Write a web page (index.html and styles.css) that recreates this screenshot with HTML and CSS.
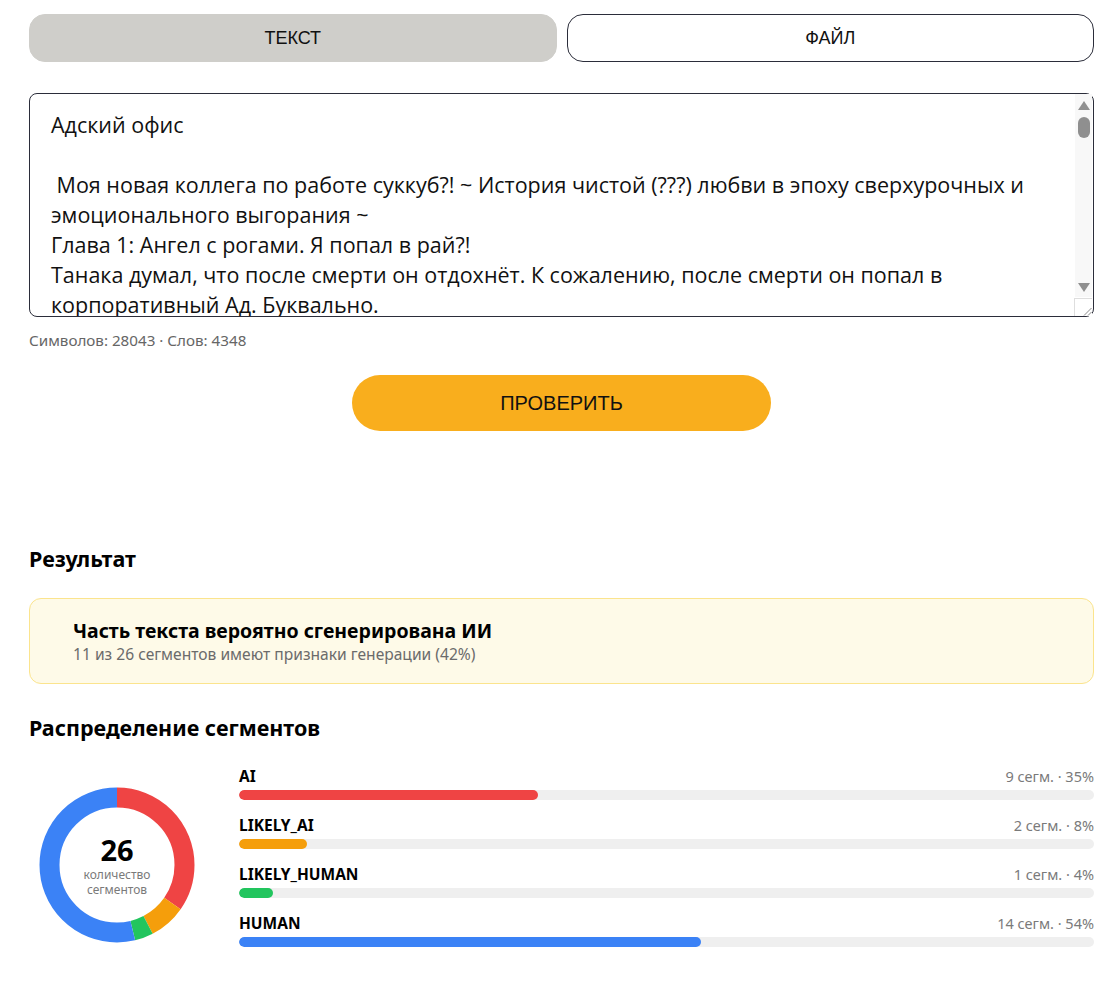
FILE: index.html
```html
<!DOCTYPE html>
<html lang="ru">
<head>
<meta charset="utf-8">
<title>Проверка текста</title>
<link rel="stylesheet" href="styles.css">
</head>
<body>
<main class="page">
  <div class="tabs">
    <button class="tab tab-active">ТЕКСТ</button>
    <button class="tab">ФАЙЛ</button>
  </div>

  <div class="editor-wrap">
  <textarea class="editor" spellcheck="false">Адский офис

 Моя новая коллега по работе суккуб?! ~ История чистой (???) любви в эпоху сверхурочных и эмоционального выгорания ~
Глава 1: Ангел с рогами. Я попал в рай?!
Танака думал, что после смерти он отдохнёт. К сожалению, после смерти он попал в корпоративный Ад. Буквально.
Огромное здание из чёрного обсидиана возвышалось над багровым небом, а на стеклянных дверях висела табличка: «ООО "Преисподняя". Отдел по работе с грешниками. Вход строго по пропускам».
Внутри пахло серой, дешёвым кофе и отчаянием. Где-то звонили телефоны, шуршали бумаги, а из дальнего угла доносились приглушённые стоны — видимо, там проходила планёрка.
— Новенький? — спросил усталый бес за стойкой ресепшена, не поднимая глаз от монитора. — Заполните анкету. В трёх экземплярах. Синей ручкой. Чёрной нельзя, чёрная у нас только для контрактов.
Танака обречённо взял стопку бланков. Даже после смерти бюрократия не отпускала его.
— Простите, а где здесь... ну... котлы? Вечные муки?
Бес наконец поднял глаза. В них читалась вся скорбь мира.
— Котлы сократили в прошлом квартале. Оптимизация. Теперь у нас открытое пространство, гибкий график и корпоративная культура. Поверьте, это хуже.
Танака хотел было возразить, но в этот момент двери лифта открылись, и в холл вошла она.
Высокая, в строгом сером костюме, с аккуратным пучком тёмных волос и папкой документов в руках. Если бы не маленькие изящные рожки и тонкий хвост, выглядывающий из-под юбки, её можно было бы принять за обычную сотрудницу отдела кадров.
— Вы Танака-сан? — улыбнулась она, и у Танаки перехватило дыхание. — Меня зовут Лилит. Я буду вашим наставником на испытательном сроке.
«Я попал в рай?!» — подумал Танака.
Это была его первая ошибка.
Глава 2: Испытательный срок длиною в вечность
Рабочее место Танаки находилось между кулером, который выдавал исключительно кипяток, и окном с видом на озеро лавы. Стол был завален папками, а старый монитор мигал так, будто тоже страдал от переработок.
— Ваша задача проста, — объясняла Лилит, склонившись над его плечом. — Обработать входящие заявки грешников, распределить их по кругам и подготовить отчёт к пятнице.
— К какой пятнице?
— К каждой, — мягко ответила она. — Здесь всегда пятница. И всегда дедлайн.
Танака посмотрел на часы. Стрелки не двигались. Точнее, они двигались, но всегда показывали без пяти шесть.
— Это чтобы никто не уходил вовремя, — пояснила Лилит. — Психологический приём. Очень эффективный.
Он вздохнул и открыл первую папку. Грешник номер 66613: опоздание на работу, двенадцать тысяч раз. Приговор: вечная очередь в бухгалтерию.
— Справедливо, — пробормотал Танака.
Лилит рассмеялась, и на мгновение Танаке показалось, что в этом мрачном офисе стало немного светлее.
Глава 3: Корпоратив в девятом круге
Через неделю — или через вечность, здесь было трудно понять — в общем чате появилось объявление: «Обязательный корпоратив! Явка строго обязательна. Отказ будет засчитан как грех уныния».
— Мы правда должны идти? — спросил Танака.
— Все должны, — ответила Лилит, поправляя рожки перед зеркалом. — Даже начальство. Особенно начальство.
</textarea>
    <div class="scrollbar" aria-hidden="true">
      <span class="sb-arrow sb-up"></span>
      <span class="sb-thumb"></span>
      <span class="sb-arrow sb-down"></span>
    </div>
    <div class="resizer" aria-hidden="true">
      <svg width="10" height="10" viewBox="0 0 10 10"><line x1="9.5" y1="2" x2="2" y2="9.5" stroke="#8a8a8a" stroke-width="1"/><line x1="9.5" y1="6" x2="6" y2="9.5" stroke="#8a8a8a" stroke-width="1"/></svg>
    </div>
  </div>

  <div class="counts">Символов: 28043 · Слов: 4348</div>

  <div class="actions">
    <button class="check-btn">ПРОВЕРИТЬ</button>
  </div>

  <h2 class="section-title result-title">Результат</h2>

  <div class="verdict">
    <div class="verdict-title">Часть текста вероятно сгенерирована ИИ</div>
    <div class="verdict-sub">11 из 26 сегментов имеют признаки генерации (42%)</div>
  </div>

  <h2 class="section-title dist-title">Распределение сегментов</h2>

  <div class="dist">
    <div class="donut">
      <svg class="donut-svg" width="156" height="156" viewBox="0 0 156 156">
        <g transform="rotate(-90 78 78)">
          <circle cx="78" cy="78" r="67.5" fill="none" stroke="#ef4444" stroke-width="20" stroke-dasharray="146.82 500" stroke-dashoffset="0"/>
          <circle cx="78" cy="78" r="67.5" fill="none" stroke="#f59e0b" stroke-width="20" stroke-dasharray="32.62 500" stroke-dashoffset="-146.82"/>
          <circle cx="78" cy="78" r="67.5" fill="none" stroke="#22c55e" stroke-width="20" stroke-dasharray="16.31 500" stroke-dashoffset="-179.44"/>
          <circle cx="78" cy="78" r="67.5" fill="none" stroke="#3b82f6" stroke-width="20" stroke-dasharray="228.37 500" stroke-dashoffset="-195.75"/>
        </g>
      </svg>
      <div class="donut-center">
        <div class="donut-num">26</div>
        <div class="donut-cap">количество<br>сегментов</div>
      </div>
    </div>

    <div class="bars">
      <div class="bar-row">
        <div class="bar-head"><span class="bar-label">AI</span><span class="bar-val">9 сегм. · 35%</span></div>
        <div class="track"><div class="fill fill-ai" style="width:35%"></div></div>
      </div>
      <div class="bar-row">
        <div class="bar-head"><span class="bar-label">LIKELY_AI</span><span class="bar-val">2 сегм. · 8%</span></div>
        <div class="track"><div class="fill fill-lai" style="width:8%"></div></div>
      </div>
      <div class="bar-row">
        <div class="bar-head"><span class="bar-label">LIKELY_HUMAN</span><span class="bar-val">1 сегм. · 4%</span></div>
        <div class="track"><div class="fill fill-lh" style="width:4%"></div></div>
      </div>
      <div class="bar-row">
        <div class="bar-head"><span class="bar-label">HUMAN</span><span class="bar-val">14 сегм. · 54%</span></div>
        <div class="track"><div class="fill fill-h" style="width:54%"></div></div>
      </div>
    </div>
  </div>
</main>
</body>
</html>
```

FILE: styles.css
```css
* { box-sizing: border-box; }

html, body {
  margin: 0;
  padding: 0;
  background: #ffffff;
}

body {
  font-family: "Noto Sans", Roboto, "Liberation Sans", sans-serif;
  color: #111111;
}

.page {
  width: 1065px;
  margin-left: 29px;
  padding-top: 14px;
  padding-bottom: 60px;
}

.tabs {
  display: flex;
  gap: 10px;
}

.tab {
  flex: 1;
  height: 48px;
  border-radius: 16px;
  border: 1px solid #2b2d3a;
  background: #ffffff;
  font-family: "Liberation Sans", Arial, sans-serif;
  font-size: 18px;
  color: #111111;
  padding: 0;
  cursor: pointer;
}

.tab-active {
  background: #cfceca;
  border-color: #cfceca;
}

.editor-wrap {
  position: relative;
  margin-top: 31px;
  height: 224px;
}

.editor {
  display: block;
  width: 100%;
  height: 224px;
  border: 1px solid #2b2d3a;
  border-radius: 8px;
  padding: 16px 37px 0 21px;
  font-family: "Open Sans", "Noto Sans", sans-serif;
  font-size: 21.5px;
  line-height: 30px;
  color: #111111;
  background: #ffffff;
  resize: none;
  overflow: hidden;
  outline: none;
}

.scrollbar {
  position: absolute;
  top: 1px;
  right: 2px;
  width: 17px;
  height: 203px;
  background: #f8f8f8;
  display: flex;
  flex-direction: column;
  align-items: center;
}

.sb-arrow {
  display: block;
  width: 0;
  height: 0;
  border-left: 6.5px solid transparent;
  border-right: 6.5px solid transparent;
}

.sb-up {
  margin-top: 7px;
  border-bottom: 9px solid #909090;
}

.sb-thumb {
  display: block;
  width: 12px;
  height: 21px;
  margin-top: 7px;
  border-radius: 6px;
  background: #8f8f8f;
}

.sb-down {
  margin-top: auto;
  margin-bottom: 5px;
  border-top: 9px solid #909090;
}

.resizer {
  position: absolute;
  right: 2px;
  bottom: 1px;
  width: 18px;
  height: 18px;
  background: #ffffff;
  border-top: 1px solid #dedede;
  border-left: 1px solid #dedede;
  display: flex;
  align-items: flex-end;
  justify-content: flex-end;
}

.resizer svg {
  display: block;
}

.counts {
  margin-top: 13px;
  font-size: 15.2px;
  line-height: 20px;
  color: #666666;
}

.actions {
  display: flex;
  justify-content: center;
  margin-top: 25px;
}

.check-btn {
  width: 419px;
  height: 56px;
  border: none;
  border-radius: 28px;
  background: #f9ae1d;
  font-family: "Liberation Sans", Arial, sans-serif;
  font-size: 20px;
  color: #111111;
  cursor: pointer;
}

.section-title {
  margin: 0;
  font-size: 21.5px;
  line-height: 24px;
  font-weight: 700;
  color: #000000;
}

.result-title {
  margin-top: 116px;
}

.verdict {
  margin-top: 27px;
  height: 86px;
  padding: 20px 43px 0;
  background: #fefae8;
  border: 1px solid #fbe48d;
  border-radius: 12px;
}

.verdict-title {
  font-size: 19.5px;
  line-height: 24px;
  font-weight: 700;
  color: #000000;
}

.verdict-sub {
  margin-top: 2px;
  font-size: 15.6px;
  line-height: 18px;
  color: #6b6b6b;
}

.dist-title {
  margin-top: 32px;
}

.dist {
  display: flex;
  align-items: flex-start;
  gap: 34px;
  margin-top: 25px;
}

.donut {
  position: relative;
  width: 176px;
  height: 156px;
  margin-top: 22px;
  display: flex;
  justify-content: center;
}

.donut-svg {
  display: block;
}

.donut-center {
  position: absolute;
  left: 0;
  right: 0;
  top: 0;
  bottom: 0;
  display: flex;
  flex-direction: column;
  align-items: center;
  justify-content: center;
}

.donut-num {
  font-size: 29px;
  line-height: 30px;
  font-weight: 700;
  color: #000000;
  margin-top: 2px;
}

.donut-cap {
  margin-top: 2px;
  font-size: 12px;
  line-height: 15px;
  color: #7a7a7a;
  text-align: center;
}

.bars {
  flex: 1;
  display: flex;
  flex-direction: column;
  gap: 14px;
}

.bar-head {
  display: flex;
  justify-content: space-between;
  align-items: center;
  height: 20px;
  margin-top: 1px;
  margin-bottom: -1px;
}

.bar-label {
  font-size: 15.5px;
  font-weight: 700;
  color: #000000;
}

.bar-val {
  font-size: 14.5px;
  color: #7a7a7a;
}

.track {
  margin-top: 5px;
  height: 10px;
  border-radius: 5px;
  background: #efefef;
  overflow: hidden;
}

.fill {
  height: 100%;
  border-radius: 5px;
}

.fill-ai { background: #ef4444; }
.fill-lai { background: #f59e0b; }
.fill-lh { background: #22c55e; }
.fill-h { background: #3b82f6; }
```
